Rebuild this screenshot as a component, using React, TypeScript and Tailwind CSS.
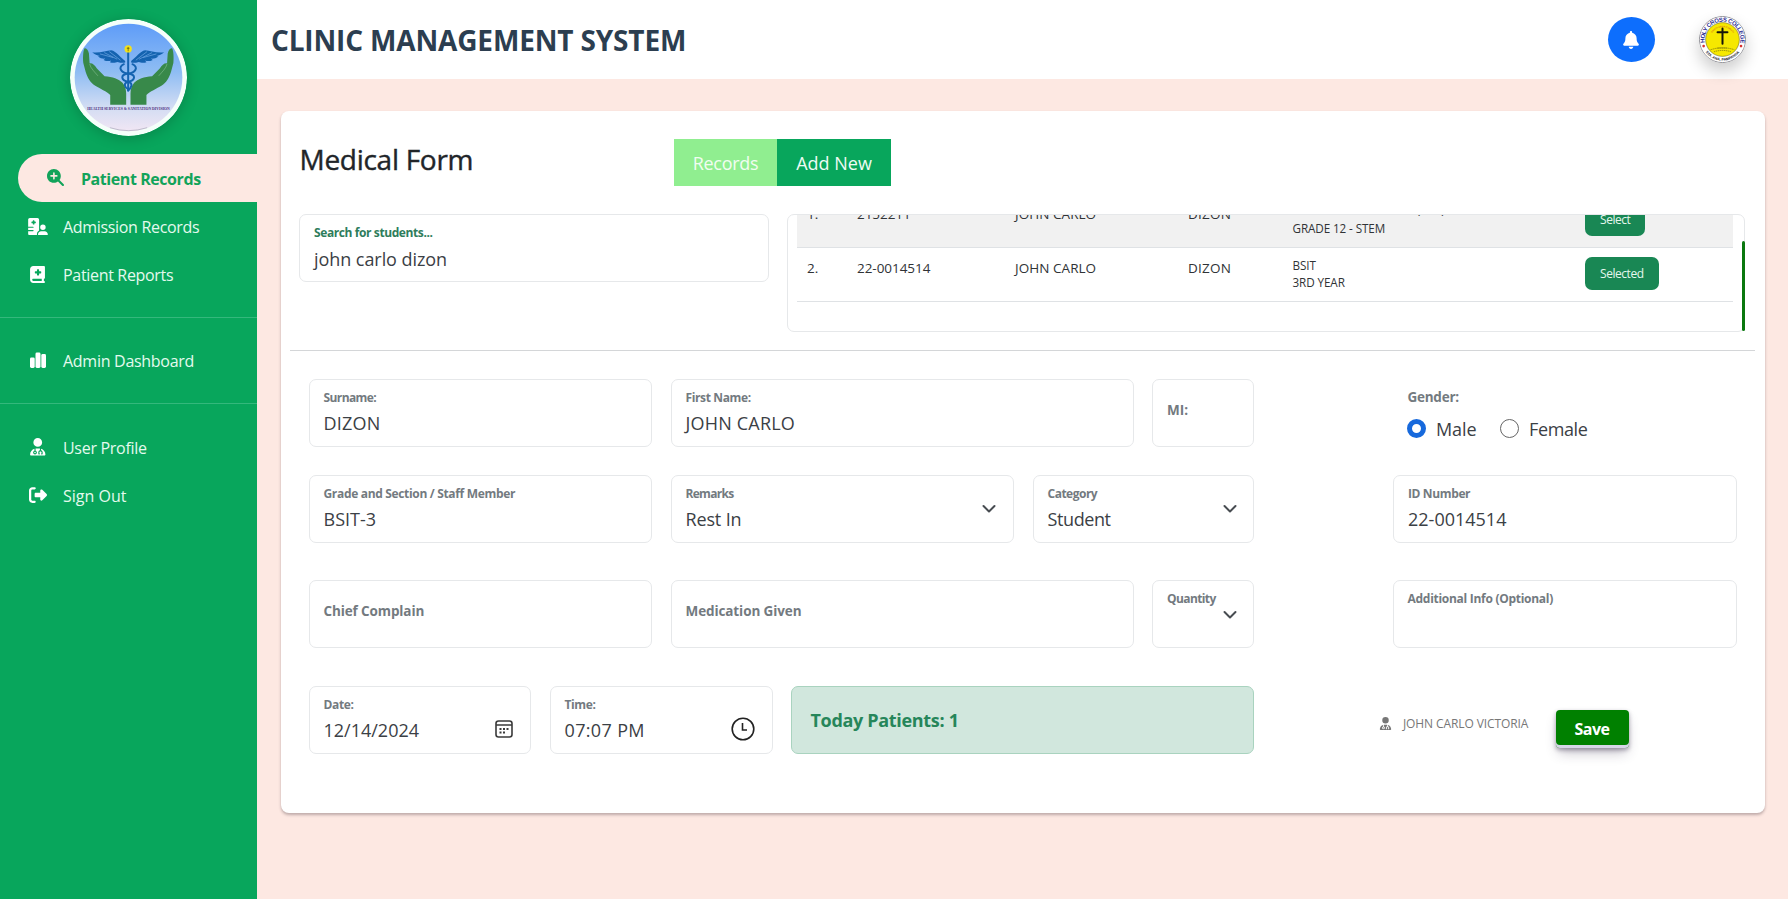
import type { ReactNode } from "react";
import {
  FaBell,
  FaBookMedical,
  FaHospitalUser,
  FaMagnifyingGlassPlus,
  FaRightFromBracket,
  FaUserDoctor,
} from "react-icons/fa6";

function ClinicLogo() {
  const wing =
    "M376 181 C362 172 350 152 334 149 C320 150 298 158 277 155 C284 162 292 165 300 166 L294 168 C302 174 310 175 316 174 L311 178 C320 183 328 182 334 180 L330 185 C340 188 348 186 353 184 C362 187 370 187 376 186 Z";
  const hand =
    "M254 143 C259 141 265 148 267 159 L269 188 C278 187 284 193 291 204 L314 227 C338 229 357 235 368 247 C376 256 379 268 379 280 L379 313 L331 313 L331 284 C322 274 299 264 286 256 C270 246 263 232 257 214 L250 187 C248 170 250 148 254 143 Z";
  return (
    <svg viewBox="210 55 352 352" className="size-[117px] shrink-0 rounded-full shadow-[0_2px_14px_rgba(0,0,0,0.2)]">
      <defs>
        <linearGradient id="sky" x1="0" y1="0" x2="0" y2="1">
          <stop offset="0" stopColor="#5e9cf8" />
          <stop offset="0.45" stopColor="#8fbdf3" />
          <stop offset="0.78" stopColor="#d3ddf3" />
          <stop offset="1" stopColor="#f1e6f4" />
        </linearGradient>
      </defs>
      <circle cx="386" cy="231" r="176" fill="#f5fffa" />
      <circle cx="386" cy="231" r="162" fill="url(#sky)" />
      <path d="M330 382 Q386 400 442 382" fill="none" stroke="#8d90a3" strokeWidth="1.5" />
      <g fill="#38894a">
        <path d={hand} />
        <path d={hand} transform="translate(771 0) scale(-1 1)" />
      </g>
      <g fill="none" stroke="#7db98a" strokeWidth="2">
        <path d="M269 190 C272 204 284 214 294 226" />
        <path d="M502 190 C499 204 487 214 477 226" />
      </g>
      <g fill="#1463b0">
        <path d={wing} />
        <path d={wing} transform="translate(770 0) scale(-1 1)" />
      </g>
      <g fill="none" stroke="#7db4ec" strokeWidth="1.8">
        <path d="M300 160 L340 171 M313 156 L352 176 M328 153 L362 179" />
        <path d="M470 160 L430 171 M457 156 L418 176 M442 153 L408 179" />
      </g>
      <g fill="none" stroke="#1463b0" strokeLinecap="round">
        <path d="M385 156 L385 270" strokeWidth="6" />
        <path d="M372 191 C352 200 364 217 385 219 C411 223 406 240 385 244 C368 249 376 262 385 266" strokeWidth="6" />
        <path d="M398 191 C418 200 406 217 385 219 C359 223 364 240 385 244 C402 249 394 262 385 270" strokeWidth="6" />
      </g>
      <circle cx="385" cy="145" r="11" fill="#f3e11b" />
      <path d="M385 139 L385 152 M381 143 L389 143" stroke="#4d4a12" strokeWidth="2" />
      <text
        x="386"
        y="328"
        textAnchor="middle"
        textLength="248"
        lengthAdjust="spacingAndGlyphs"
        className="fill-[#4b2d7f] font-['Liberation_Serif',serif] text-[11.5px] font-bold"
      >
        HEALTH SERVICES &amp; SANITATION DIVISION
      </text>
    </svg>
  );
}

function CollegeSeal() {
  return (
    <svg viewBox="417 50 142 142" className="size-[47px] rounded-full shadow-[0_8px_16px_rgba(0,0,0,0.2)]">
      <defs>
        <path id="seal-top" d="M434.200 125.700 A54 54 0 1 1 541.800 125.700" />
        <path id="seal-bottom" d="M424 121 A64 64 0 0 0 552 121" />
        <path id="seal-motto" d="M451 121 A37 37 0 0 1 525 121" />
      </defs>
      <circle cx="488" cy="121" r="70" fill="#fff" stroke="#4a4a55" strokeWidth="2" />
      <circle cx="488" cy="121" r="51" fill="#f6e800" stroke="#55552a" strokeWidth="1.5" />
      <text className="fill-[#2c2c90] font-['Liberation_Sans',sans-serif] text-[18px] font-bold tracking-[-1.100px]">
        <textPath href="#seal-top" startOffset="50%" textAnchor="middle">HOLY CROSS COLLEGE</textPath>
      </text>
      <text className="fill-[#22222c] font-['Liberation_Sans',sans-serif] text-[11px] font-bold">
        <textPath href="#seal-bottom" startOffset="50%" textAnchor="middle">STA. ANA, PAMPANGA</textPath>
      </text>
      <text className="fill-[#e07a10] font-['Liberation_Sans',sans-serif] text-[7px] font-bold">
        <textPath href="#seal-motto" startOffset="50%" textAnchor="middle">SANTA ANNA CHRISTI</textPath>
      </text>
      <circle cx="431" cy="141" r="4" fill="#d8302f" />
      <circle cx="544" cy="141" r="4" fill="#d8302f" />
      <path d="M488 88 L488 134 M473 99 L503 99" stroke="#14140a" strokeWidth="6" strokeLinecap="round" />
      <path d="M473 147 L503 147 M452 152 Q488 140 524 152 M462 158 Q488 150 514 158" fill="none" stroke="#7f7a10" strokeWidth="2.5" strokeDasharray="4 2" />
    </svg>
  );
}

function BarsIcon() {
  return (
    <svg viewBox="0 0 16 16" className="size-4" fill="currentColor">
      <rect x="0" y="5.400" width="4.700" height="10.600" rx="1.400" />
      <rect x="5.500" y="0.500" width="5" height="15.500" rx="1.400" />
      <rect x="11.300" y="2" width="4.700" height="14" rx="1.400" />
    </svg>
  );
}

function NavItem({ icon, children, tracking }: { icon: ReactNode; children: string; tracking: string }) {
  return (
    <a className="flex h-[47.700px] items-center pl-[27px] text-[#e4faee]">
      <span className="flex w-[36px] -translate-y-px text-white">{icon}</span>
      <span className={`text-base ${tracking}`}>{children}</span>
    </a>
  );
}

function Sidebar() {
  return (
    <aside className="flex w-[257px] shrink-0 flex-col bg-[#08a65c]">
      <div className="flex h-[154px] justify-center pt-[18.500px]">
        <ClinicLogo />
      </div>
      <a className="ml-[18px] flex h-[48px] items-center rounded-l-[24px] bg-[#fde8e2] pl-[28.500px] text-[#12a35a]">
        <FaMagnifyingGlassPlus className="size-[17px] -translate-y-px" />
        <span className="ml-[17.500px] pt-px text-base font-bold tracking-[-0.430px]">Patient Records</span>
      </a>
      <div className="mt-[1.500px]">
        <NavItem icon={<FaHospitalUser className="ml-px h-[17.500px] w-5" />} tracking="tracking-[-0.320px]">Admission Records</NavItem>
        <NavItem icon={<FaBookMedical className="ml-[2px] size-[17px]" />} tracking="tracking-[-0.320px]">Patient Reports</NavItem>
      </div>
      <div className="mt-[18.500px] h-px bg-[#34b87c]" />
      <div className="mt-[19px]">
        <NavItem icon={<span className="ml-[2.500px]"><BarsIcon /></span>} tracking="tracking-[-0.280px]">Admin Dashboard</NavItem>
      </div>
      <div className="mt-[18px] h-px bg-[#34b87c]" />
      <div className="mt-[20px]">
        <NavItem icon={<FaUserDoctor className="ml-[2px] size-[17.500px]" />} tracking="tracking-[-0.290px]">User Profile</NavItem>
        <NavItem icon={<FaRightFromBracket className="ml-[1.500px] size-[18px]" />} tracking="tracking-normal">Sign Out</NavItem>
      </div>
    </aside>
  );
}

const box = "rounded-[7px] border border-[#e6e8ea] bg-white";

function Field({
  label,
  value,
  size,
  labelColor = "text-[#737a80]",
  labelClass = "tracking-[-0.370px]",
  valueClass = "",
  valueOffset = "mt-[5px]",
  children,
}: {
  label: string;
  value?: string;
  size: string;
  labelColor?: string;
  labelClass?: string;
  valueClass?: string;
  valueOffset?: string;
  children?: ReactNode;
}) {
  return (
    <div className={`${box} ${size} flex h-[68px] shrink-0 items-start justify-between pt-[10px] pl-[14px]`}>
      <div className="whitespace-nowrap">
        <div className={`text-xs leading-4 font-bold ${labelColor} ${labelClass}`}>{label}</div>
        {value && <div className={`text-lg leading-6 text-[#3b4045] ${valueOffset} ${valueClass}`}>{value}</div>}
      </div>
      {children}
    </div>
  );
}

function Placeholder({ label, size, tracking }: { label: string; size: string; tracking: string }) {
  return (
    <div className={`${box} ${size} flex h-[68px] shrink-0 items-start pt-5 pl-[14px]`}>
      <span className={`text-[13.500px] leading-5 font-bold text-[#737a80] ${tracking}`}>{label}</span>
    </div>
  );
}

function Chevron({ className = "mt-[15px]" }: { className?: string }) {
  return (
    <svg viewBox="0 0 16 16" className={`mr-[15.500px] size-4 shrink-0 ${className}`} fill="none" stroke="#474c51" strokeWidth="2" strokeLinecap="round" strokeLinejoin="round">
      <path d="m2.500 5 5.500 5.500 5.500-5.500" />
    </svg>
  );
}

function CalendarIcon() {
  return (
    <svg viewBox="0 0 18 18" className="mt-[23.500px] mr-[17px] size-[18px] shrink-0" fill="none" stroke="#3a3a3a">
      <rect x="1" y="1" width="16" height="16" rx="2.500" strokeWidth="1.600" />
      <path d="M1 5 H17" strokeWidth="1.500" />
      <path d="M4.500 8.900h2M8 8.900h2M11.500 8.900h2M4.500 12.600h2M8 12.600h2" strokeWidth="2" />
    </svg>
  );
}

function ClockIcon() {
  return (
    <svg viewBox="0 0 24 24" className="mt-[20px] mr-[16.500px] size-6 shrink-0" fill="none" stroke="#222">
      <circle cx="12" cy="12" r="10.800" strokeWidth="1.600" />
      <path d="M11.500 6 V13 H16" strokeWidth="1.600" />
    </svg>
  );
}

interface Student {
  no: string;
  id: string;
  first: string;
  last: string;
  course: string;
  level: string;
  action: string;
  stripe: string;
  courseOffset: string;
}

const students: Student[] = [
  { no: "1.", id: "2152211", first: "JOHN CARLO", last: "DIZON", course: "SENIOR HIGH SCHOOL (SHS)", level: "GRADE 12 - STEM", action: "Select", stripe: "bg-[#f1f1f1]", courseOffset: "-mt-[2px] mb-[2px]" },
  { no: "2.", id: "22-0014514", first: "JOHN CARLO", last: "DIZON", course: "BSIT", level: "3RD YEAR", action: "Selected", stripe: "bg-white", courseOffset: "" },
];

function StudentTable() {
  return (
    <div className="relative w-[958px]">
      <div className={`${box} h-[118px] overflow-hidden pl-[9px]`}>
        <div className="-mt-[21px] w-[936px]">
          {students.map((s) => (
            <div
              key={s.no}
              className={`grid h-[54px] grid-cols-[50px_158px_173px_104.500px_292.500px_148px] border-b border-[#dfe2e5] pt-[9px] pl-[10px] text-[#303336] ${s.stripe}`}
            >
              <span className="text-[13.500px] leading-[22px]">{s.no}</span>
              <span className="text-[13.500px] leading-[22px] tracking-[-0.050px]">{s.id}</span>
              <span className="text-[13.500px] leading-[22px] tracking-[0.050px]">{s.first}</span>
              <span className="text-[13.500px] leading-[22px] tracking-[0.250px]">{s.last}</span>
              <span className="text-[11.700px] leading-[16.500px] tracking-[-0.100px] whitespace-nowrap">
                <span className={`block ${s.courseOffset}`}>{s.course}</span>
                <span className="block">{s.level}</span>
              </span>
              <button className="flex h-[33px] items-center justify-self-start rounded-[7px] bg-[#198754] px-[15px] text-xs tracking-[-0.450px] text-[#e6f7ee]">
                {s.action}
              </button>
            </div>
          ))}
        </div>
      </div>
      <div className="absolute right-0 bottom-px h-[90px] w-[3px] rounded-full bg-[#0a780f]" />
    </div>
  );
}

function MedicalForm() {
  return (
    <section className="mt-8 ml-[23.500px] flex h-[702px] w-[1484.500px] flex-col rounded-lg bg-white shadow-[0_2px_3px_rgba(60,40,50,0.32)]">
      <div className="flex h-[103px] items-start pl-[19px]">
        <h2 className="mt-[31px] w-[374.500px] text-[28px] leading-[34px] font-medium tracking-[-0.280px] text-[#212529] [-webkit-text-stroke:0.4px_#212529]">
          Medical Form
        </h2>
        <div className="mt-[28px] flex h-[47px] text-lg">
          <button className="w-[103px] bg-[#90ee90] pt-px tracking-[-0.300px] text-[#f0fdf0]">Records</button>
          <button className="w-[114px] bg-[#08a65c] pt-px text-[#eefbf4]">Add New</button>
        </div>
      </div>
      <div className="mr-[10px] ml-[9.500px] flex h-[137px] items-start gap-[18px] border-b border-[#d4d6d8] pl-[9px]">
        <Field
          label="Search for students..."
          value="john carlo dizon"
          size="w-[470px]"
          labelColor="text-[#2e7d5b]"
          labelClass="tracking-[-0.400px]"
          valueClass="tracking-[-0.060px]"
          valueOffset="mt-[6px]"
        />
        <StudentTable />
      </div>

      <div className="ml-7 flex pt-[28px]">
        <Field label="Surname:" value="DIZON" size="w-[343px]" labelClass="tracking-[-0.600px]" valueClass="tracking-[0.200px]" />
        <Field label="First Name:" value="JOHN CARLO" size="ml-[19px] w-[463px]" valueClass="tracking-[0.200px]" />
        <Placeholder label="MI:" size="ml-[18.500px] w-[102px]" tracking="tracking-normal" />
        <div className="ml-[153px] pt-2">
          <div className="ml-[0.500px] text-[13.500px] leading-5 font-bold tracking-[-0.250px] text-[#737a80]">Gender:</div>
          <div className="mt-[9.500px] flex h-6 items-center text-lg text-[#3b4045]">
            <span className="size-[19px] shrink-0 rounded-full border-[5px] border-[#1769dc] bg-white" />
            <span className="ml-[10px] tracking-[-0.080px]">Male</span>
            <span className="ml-[23.500px] size-[19px] shrink-0 rounded-full border border-[#666] bg-white" />
            <span className="ml-[10px] tracking-[-0.400px]">Female</span>
          </div>
        </div>
      </div>

      <div className="ml-7 flex pt-7">
        <Field label="Grade and Section / Staff Member" value="BSIT-3" size="w-[343px]" labelClass="tracking-[-0.330px]" />
        <Field label="Remarks" value="Rest In" size="ml-[19px] w-[343px]" labelClass="tracking-[-0.700px]" valueClass="tracking-[-0.150px]">
          <Chevron />
        </Field>
        <Field label="Category" value="Student" size="ml-[19px] w-[221.500px]" labelClass="tracking-[-0.500px]" valueClass="tracking-[-0.400px]">
          <Chevron />
        </Field>
        <Field label="ID Number" value="22-0014514" size="ml-[139px] w-[344px]" />
      </div>

      <div className="ml-7 flex pt-[37px]">
        <Placeholder label="Chief Complain" size="w-[343px]" tracking="tracking-[-0.120px]" />
        <Placeholder label="Medication Given" size="ml-[19px] w-[463px]" tracking="tracking-[-0.100px]" />
        <Field label="Quantity" size="ml-[18.500px] w-[102px]" labelClass="w-5 tracking-[-0.600px]">
          <Chevron className="mt-[15.500px]" />
        </Field>
        <Field label="Additional Info (Optional)" size="ml-[138.500px] w-[344px]" labelClass="tracking-[-0.280px]" />
      </div>

      <div className="ml-7 flex items-start pt-[37.500px]">
        <Field label="Date:" value="12/14/2024" size="w-[222px]" labelClass="tracking-[-0.350px]">
          <CalendarIcon />
        </Field>
        <Field label="Time:" value="07:07 PM" size="ml-[19px] w-[223px]" valueClass="tracking-[0.350px]">
          <ClockIcon />
        </Field>
        <div className="ml-[18px] flex h-[68px] w-[463px] items-center rounded-[7px] border border-[#a9d3bf] bg-[#d1e7dd] pl-[19px] text-lg font-bold tracking-[-0.320px] text-[#26865a]">
          Today Patients: 1
        </div>
        <div className="mt-[28px] ml-[125px] flex h-[20px] w-[177px] items-center text-[#777]">
          <FaUserDoctor className="size-[13px]" />
          <span className="ml-[11.500px] text-xs tracking-[-0.100px] whitespace-nowrap">JOHN CARLO VICTORIA</span>
        </div>
        <button className="mt-[24px] h-[38px] w-[73px] rounded bg-[#008000] text-base font-bold tracking-[-0.450px] text-white shadow-[0_2px_4px_rgba(45,35,66,0.4),0_7px_13px_-3px_rgba(45,35,66,0.3),inset_0_-3px_0_#d6d6e7]">
          Save
        </button>
      </div>
    </section>
  );
}

export default function App() {
  return (
    <div className="flex h-[899px] w-full overflow-hidden bg-[#fde8e2] font-['Open_Sans','Noto_Sans',sans-serif]">
      <Sidebar />
      <main className="flex min-w-0 flex-1 flex-col">
        <header className="flex h-[79px] shrink-0 items-center bg-white pr-[42px] pl-[14px]">
          <h1 className="flex-1 text-[28px] font-bold tracking-[-0.150px] text-[#2c3e50]">CLINIC MANAGEMENT SYSTEM</h1>
          <button className="mr-[44.500px] flex h-[45px] w-[47px] items-center justify-center rounded-[50%] bg-[#0d6efd] text-white">
            <FaBell className="size-[18px]" />
          </button>
          <CollegeSeal />
        </header>
        <MedicalForm />
      </main>
    </div>
  );
}
